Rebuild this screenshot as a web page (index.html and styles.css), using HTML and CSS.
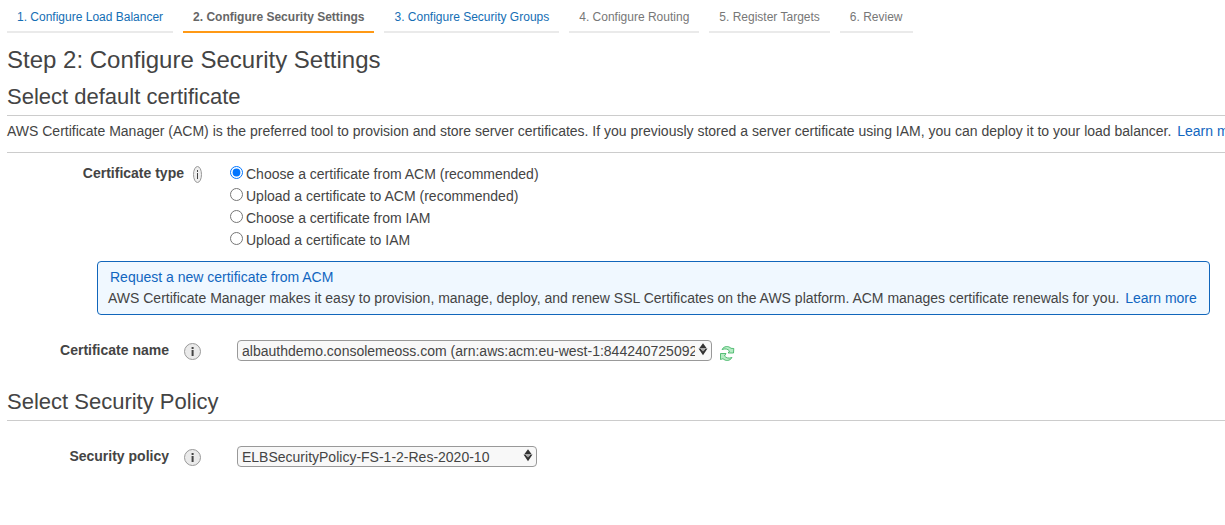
FILE: index.html
```html
<!DOCTYPE html>
<html lang="en">
<head>
<meta charset="utf-8">
<title>Configure Security Settings</title>
<link rel="stylesheet" href="styles.css">
</head>
<body>
<nav class="steps">
  <a class="step link">1. Configure Load Balancer</a>
  <a class="step current">2. Configure Security Settings</a>
  <a class="step link">3. Configure Security Groups</a>
  <a class="step">4. Configure Routing</a>
  <a class="step">5. Register Targets</a>
  <a class="step">6. Review</a>
</nav>
<main>
  <h1>Step 2: Configure Security Settings</h1>
  <h2>Select default certificate</h2>
  <p class="intro">AWS Certificate Manager (ACM) is the preferred tool to provision and store server certificates. If you previously stored a server certificate using IAM, you can deploy it to your load balancer. <a class="more">Learn more</a></p>
  <div class="types">
    <div class="label">Certificate type</div>
    <span class="info narrow"><svg viewBox="0 0 9 17" width="9" height="17"><ellipse cx="4.5" cy="8.5" rx="4" ry="8" fill="#eee" stroke="#999"/><path d="M4.5 4v2M4.500 7v6" stroke="#444" fill="none"/></svg></span>
    <div class="options">
      <label><input type="radio" name="type" checked><span>Choose a certificate from ACM (recommended)</span></label>
      <label><input type="radio" name="type"><span>Upload a certificate to ACM (recommended)</span></label>
      <label><input type="radio" name="type"><span>Choose a certificate from IAM</span></label>
      <label><input type="radio" name="type"><span>Upload a certificate to IAM</span></label>
    </div>
  </div>
  <div class="notice">
    <a class="request">Request a new certificate from ACM</a>
    <div>AWS Certificate Manager makes it easy to provision, manage, deploy, and renew SSL Certificates on the AWS platform. ACM manages certificate renewals for you. <a class="more">Learn more</a></div>
  </div>
  <div class="field name">
    <div class="label">Certificate name</div>
    <svg class="info" viewBox="0 0 17 17" width="17" height="17"><circle cx="8.5" cy="8.5" r="8" fill="#eaeaea" stroke="#999"/><path d="M7.600 4h2v2h-2zM7.600 7h2v6h-2z" fill="#444"/></svg>
    <div class="select wide"><span>albauthdemo.consolemeoss.com (arn:aws:acm:eu-west-1:844240725092</span><svg class="arrows" viewBox="0 0 10 13" width="10" height="13"><path d="M5 .3 8.500 5H1.500zM.5 5.500h9L5 12.300z" fill="#333"/><path d="M3 5h4v1.500L5 8.500 3 6.500z" fill="#aaa"/></svg></div>
    <svg class="refresh" viewBox="0 0 16 16" width="16" height="16"><g fill="#b5ebc3" stroke="#35ae5c" stroke-width=".8" stroke-linejoin="round"><path d="M3 4.500C5 .8 9.500.7 12 3.300L14.800 3.500 14.500 8H9.200L10.500 6C8.500 3.800 6.500 3.500 3 4.500z"/><path d="M13 12.500C11 16.200 6.500 16.300 4 13.700L1.500 14.500V8.500H7L5.500 11C7.500 13.200 9.500 13.500 13 12.500z"/></g></svg>
  </div>
  <h2 class="policy-title">Select Security Policy</h2>
  <div class="field policy">
    <div class="label">Security policy</div>
    <svg class="info" viewBox="0 0 17 17" width="17" height="17"><circle cx="8.5" cy="8.5" r="8" fill="#eaeaea" stroke="#999"/><path d="M7.600 4h2v2h-2zM7.600 7h2v6h-2z" fill="#444"/></svg>
    <div class="select"><span>ELBSecurityPolicy-FS-1-2-Res-2020-10</span><svg class="arrows" viewBox="0 0 10 13" width="10" height="13"><path d="M5 .3 8.500 5H1.500zM.5 5.500h9L5 12.300z" fill="#333"/><path d="M3 5h4v1.500L5 8.500 3 6.500z" fill="#aaa"/></svg></div>
  </div>
</main>
</body>
</html>
```
FILE: styles.css
```css
* { box-sizing: border-box; }
body {
  margin: 0;
  height: 525px;
  padding-left: 7px;
  overflow: hidden;
  background: #fff;
  color: #444;
  font: 14px/20px "Liberation Sans", Arial, sans-serif;
  white-space: nowrap;
}
svg { display: block; flex: none; }
h1, h2 { margin: 0; font-weight: normal; }
h1 { height: 46px; padding-top: 12px; font-size: 24px; line-height: 30px; }
h2 { height: 37px; padding-top: 3px; border-bottom: 1px solid #ccc; font-size: 22px; line-height: 30px; }
a { color: #1166bb; }
.steps { display: flex; gap: 10px; height: 33px; font-size: 12px; }
.step { height: 33px; padding: 7px 10px 0; border-bottom: 2px solid #eaeaea; color: #777; }
.step.link { color: #146eb4; }
.step.current { border-color: #ff9915; color: #666; font-weight: bold; }
.intro { height: 37px; margin: 0; padding-top: 5px; border-bottom: 1px solid #ccc; }
.more, .request { color: #1166c0; }
.more { margin-left: 2px; }
.types { display: flex; height: 108px; padding-top: 10px; }
.label { font-weight: bold; text-align: right; }
.types .label { width: 177px; }
.narrow { margin: 3px 0 0 9px; }
.options { margin-left: 28px; }
.options label { display: flex; height: 22px; line-height: 22px; }
.options input { width: 13px; height: 13px; margin: 3px 3px 0 0; }
.notice {
  width: 1113px;
  height: 54px;
  margin-left: 90px;
  padding: 5px 10px;
  border: 1px solid #1166bb;
  border-radius: 4px;
  background: #f0f8ff;
  line-height: 21px;
}
.request { display: block; padding-left: 2px; }
.field { display: flex; }
.field .label { width: 162px; }
.field .info { margin: 3px 36px 0 15px; }
.name { height: 46px; margin-top: 25px; }
.policy { margin-top: 25px; }
.policy-title { height: 35px; padding-top: 1px; }
.select {
  display: flex;
  width: 300px;
  height: 21px;
  padding: 0 3px 0 4px;
  border: 1px solid #999;
  border-radius: 4px;
  background: #f8f8f8;
}
.select.wide { width: 475px; }
.select span { flex: 1; min-width: 0; margin-right: 3px; overflow: hidden; }
.arrows { margin-top: 2px; }
.refresh { margin: 5px 0 0 7px; }
```
